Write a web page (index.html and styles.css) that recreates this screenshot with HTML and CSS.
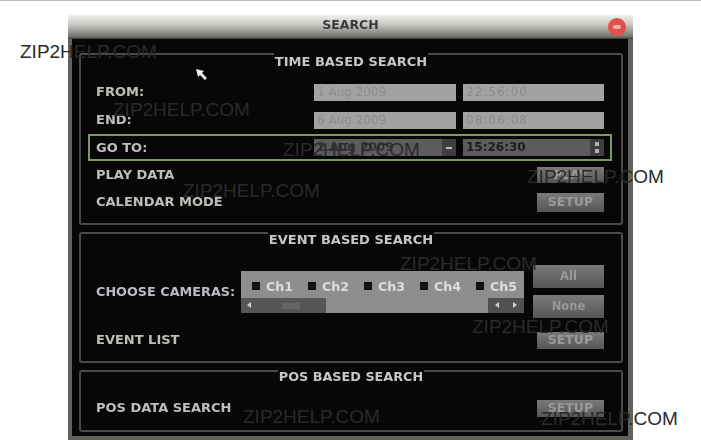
FILE: index.html
```html
<!DOCTYPE html>
<html lang="en">
<head>
    <meta charset="UTF-8">
    <meta name="viewport" content="width=device-width, initial-scale=1.0">
    <title>Search</title>
    <link rel="stylesheet" href="styles.css">
</head>
<body>

<div class="pageLine"></div>

<div class="searchWindow">
    <div class="titleBar">
        <span class="titleText">SEARCH</span>
        <span class="closeBtn"><span class="closeMark"></span></span>
    </div>

    <div class="groups">
        <section class="group groupTime">
            <h2 class="groupHead"><span>TIME BASED SEARCH</span></h2>
            <div class="row rowFrom">
                <span class="rowLabel">FROM:</span>
                <div class="field fieldDate">1 Aug 2009</div>
                <div class="field fieldTime">22:56:00</div>
            </div>
            <div class="row rowEnd">
                <span class="rowLabel">END:</span>
                <div class="field fieldDate">6 Aug 2009</div>
                <div class="field fieldTime">08:06:08</div>
            </div>
            <div class="row rowGoto">
                <span class="rowLabel">GO TO:</span>
                <div class="field fieldDate fieldActive">2 Aug 2009<span class="dropBtn"></span></div>
                <div class="field fieldTime fieldActive">15:26:30<span class="spinBtn"></span></div>
            </div>
            <div class="row rowPlay">
                <span class="rowLabel">PLAY DATA</span>
                <button class="btn btnSmall" type="button">PLAY</button>
            </div>
            <div class="row rowCalendar">
                <span class="rowLabel">CALENDAR MODE</span>
                <button class="btn btnSmall" type="button">SETUP</button>
            </div>
        </section>

        <section class="group groupEvent">
            <h2 class="groupHead"><span>EVENT BASED SEARCH</span></h2>
            <div class="cameraRow">
                <span class="cameraLabel">CHOOSE CAMERAS:</span>
                <div class="cameraBox">
                    <div class="cameraList">
                        <span class="cam">Ch1</span>
                        <span class="cam">Ch2</span>
                        <span class="cam">Ch3</span>
                        <span class="cam">Ch4</span>
                        <span class="cam">Ch5</span>
                    </div>
                    <div class="scrollBar">
                        <div class="scrollThumb"><span class="arrowLeft"></span><span class="grip"></span></div>
                        <div class="scrollEnd"><span class="arrowLeft"></span><span class="arrowRight"></span></div>
                    </div>
                </div>
                <div class="cameraBtns">
                    <button class="btn btnBig" type="button">All</button>
                    <button class="btn btnBig" type="button">None</button>
                </div>
            </div>
            <div class="row rowEvent">
                <span class="rowLabel">EVENT LIST</span>
                <button class="btn btnSmall" type="button">SETUP</button>
            </div>
        </section>

        <section class="group groupPos">
            <h2 class="groupHead"><span>POS BASED SEARCH</span></h2>
            <div class="row rowPos">
                <span class="rowLabel">POS DATA SEARCH</span>
                <button class="btn btnSmall" type="button">SETUP</button>
            </div>
        </section>
    </div>
</div>

<svg class="pointer" width="13" height="13" viewBox="0 0 13 13">
    <path d="M1 1 L9 3 L7 5 L12 10 L10 12 L5 7 L3 9 Z" fill="#e8eef0"/>
</svg>

<!-- watermark stamped over the scan -->
<span class="mark mark1">ZIP2HELP.COM</span>
<span class="mark mark2">ZIP2HELP.COM</span>
<span class="mark mark3">ZIP2HELP.COM</span>
<span class="mark mark4">ZIP2HELP.COM</span>
<span class="mark mark5">ZIP2HELP.COM</span>
<span class="mark mark6">ZIP2HELP.COM</span>
<span class="mark mark7">ZIP2HELP.COM</span>
<span class="mark mark8">ZIP2HELP.COM</span>
<span class="mark mark9">ZIP2HELP.COM</span>

</body>
</html>
```

FILE: styles.css
```css
html, body {
    height: 440px;
    overflow: hidden;
}

body {
    font-family: "DejaVu Sans", sans-serif;
    background-color: #fff;
    margin: 0;
    position: relative;
}

.pageLine {
    height: 1px;
    background-color: #bdbdbd;
}

.searchWindow {
    width: 565px;
    height: 425px;
    margin: 14px 0 0 68px;
    background-color: #070707;
    border: solid #62625c;
    border-width: 0 5px 4px 4px;
    box-sizing: border-box;
    filter: blur(0.6px);
}

.pointer {
    position: absolute;
    left: 195px;
    top: 68px;
}

.titleBar {
    height: 24px;
    margin: 0 -5px 0 -4px;
    padding-bottom: 6px;
    box-sizing: border-box;
    background: linear-gradient(#f0f0ea, #c8c8c0 40%, #74746c 90%, #3c3c38);
    display: flex;
    align-items: center;
    justify-content: center;
    position: relative;
}

.titleText {
    font-size: 12.5px;
    font-weight: bold;
    color: #3a3a3a;
}

.closeBtn {
    position: absolute;
    right: 7px;
    top: 3px;
    width: 18px;
    height: 18px;
    border-radius: 50%;
    background-color: #e0504e;
    display: flex;
    align-items: center;
    justify-content: center;
}

.closeMark {
    width: 8px;
    height: 4px;
    background-color: #f0b0ac;
    border-radius: 3px;
}

.groups {
    padding: 14px 5px 0 7px;
    display: flex;
    flex-direction: column;
    gap: 7px;
}

.group {
    border: solid #4a4a48;
    border-width: 0 2px 2px 2px;
    border-radius: 3px;
    padding: 0 17px 0 15px;
    box-sizing: border-box;
}

.groupTime { height: 172px; }
.groupEvent { height: 131px; }
.groupPos { height: 62px; }

.groupHead {
    margin: 0 -17px 0 -15px;
    height: 16px;
    display: flex;
    font-size: 13px;
    font-weight: bold;
    color: #c4c8c4;
}

.groupHead::before,
.groupHead::after {
    content: "";
    flex: 1;
    border-top: 2px solid #4a4a48;
}

.groupHead span {
    padding: 1px 1px 0;
    line-height: 15px;
}

.groupEvent .groupHead span {
    padding-top: 0;
}

.groupPos .groupHead {
    height: 14px;
}

.groupPos .groupHead span {
    font-size: 12.8px;
    padding-top: 0;
    line-height: 13px;
}

.row {
    display: flex;
    align-items: center;
    color: #bcc0b8;
    font-size: 13px;
    font-weight: bold;
}

.rowLabel {
    margin-right: auto;
    padding-bottom: 2px;
}

.rowFrom { height: 17px; margin-top: 15px; }
.rowEnd { height: 17px; margin-top: 11px; }
.rowGoto {
    height: 27px;
    margin: 5px -8px 0 -8px;
    padding: 0 6px;
    border: 2px solid #7e9a5a;
    box-sizing: border-box;
}
.rowGoto .rowLabel { padding-bottom: 0; }
.rowPlay { height: 16px; margin-top: 6px; }
.rowCalendar { height: 19px; margin-top: 10px; }
.rowEvent { height: 17px; margin-top: 14px; }
.rowPos { height: 17px; margin-top: 16px; }

.field {
    height: 17px;
    width: 142px;
    padding-left: 3px;
    box-sizing: border-box;
    background-color: #a2a2a2;
    color: #8c8c8c;
    font-size: 12px;
    font-weight: normal;
    line-height: 17px;
    position: relative;
}

.fieldTime {
    width: 141px;
    margin-left: 7px;
    letter-spacing: 1px;
}

.fieldActive {
    background-color: #5c5c5c;
    color: #1c1c1c;
    font-weight: bold;
    letter-spacing: 0;
}

.fieldDate.fieldActive {
    color: #333;
}

.dropBtn,
.spinBtn {
    position: absolute;
    right: 0;
    top: 0;
    width: 14px;
    height: 17px;
    background-color: #3e3e3e;
}

.dropBtn::after {
    content: "";
    position: absolute;
    left: 4px;
    top: 8px;
    width: 6px;
    height: 2px;
    background-color: #b8b8b8;
}

.spinBtn::before,
.spinBtn::after {
    content: "";
    position: absolute;
    left: 5px;
    width: 4px;
    height: 4px;
    background-color: #b0b0b0;
}

.spinBtn::before { top: 3px; }
.spinBtn::after { bottom: 3px; }

.btn {
    font-family: inherit;
    font-weight: bold;
    color: #9a9a9a;
    background: linear-gradient(#7a7a7a, #565656);
    border: none;
    padding: 0 0 2px;
}

.btnSmall {
    width: 67px;
    height: 100%;
    font-size: 12.5px;
}

.btnBig {
    width: 71px;
    height: 23px;
    font-size: 11.5px;
}

.cameraRow {
    display: flex;
    align-items: flex-start;
    margin-top: 17px;
    height: 53px;
}

.cameraLabel {
    width: 145px;
    margin-top: 19px;
    color: #bcbcc4;
    font-size: 12.8px;
    font-weight: bold;
    white-space: nowrap;
}

.cameraBox {
    width: 283px;
    height: 42px;
    margin-top: 6px;
    background-color: #8e8e8e;
    display: flex;
    flex-direction: column;
    justify-content: flex-end;
}

.cameraList {
    display: flex;
    flex: 1;
    align-items: center;
    padding: 3px 0 0 11px;
    gap: 15px;
}

.cam {
    display: flex;
    align-items: center;
    gap: 6px;
    color: #dcdfdc;
    font-size: 12.6px;
    font-weight: bold;
}

.cam::before {
    content: "";
    width: 8px;
    height: 8px;
    background-color: #111;
}

.scrollBar {
    height: 15px;
    display: flex;
    justify-content: space-between;
}

.scrollThumb {
    width: 85px;
    background-color: #565656;
    padding: 4px 0 0 6px;
    box-sizing: border-box;
    display: flex;
    align-items: flex-start;
}

.grip {
    width: 18px;
    height: 6px;
    margin: 1px 0 0 31px;
    background-color: #666;
}

.scrollEnd {
    width: 36px;
    background-color: #505050;
    display: flex;
    justify-content: space-around;
    padding-top: 4px;
    box-sizing: border-box;
}

.arrowLeft,
.arrowRight {
    display: block;
    width: 0;
    height: 0;
    border: 3px solid transparent;
}

.arrowLeft { border-right: 4px solid #d0d0d0; border-left: 0; }
.arrowRight { border-left: 4px solid #d0d0d0; border-right: 0; }

.cameraBtns {
    display: flex;
    flex-direction: column;
    gap: 7px;
    margin-left: 9px;
}

.mark {
    position: absolute;
    font-family: "Liberation Sans", Arial, sans-serif;
    font-size: 19px;
    line-height: 20px;
    color: #2a2a2a;
    white-space: nowrap;
}

.mark1 { left: 20px; top: 42px; }
.mark2 { left: 113px; top: 100px; }
.mark3 { left: 283px; top: 140px; }
.mark4 { left: 183px; top: 181px; }
.mark5 { left: 400px; top: 254px; }
.mark6 { left: 527px; top: 167px; }
.mark7 { left: 472px; top: 317px; }
.mark8 { left: 243px; top: 407px; }
.mark9 { left: 541px; top: 409px; }
```
